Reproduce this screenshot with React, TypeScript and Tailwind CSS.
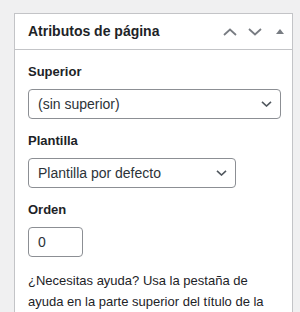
import React from "react";

function Chevron({ up = false, className = "" }: { up?: boolean; className?: string }) {
  return (
    <svg width="14" height="8" viewBox="0 0 14 8" className={className} fill="none">
      <path
        d={up ? "M1 7L7 1.5L13 7" : "M1 1L7 6.5L13 1"}
        stroke="currentColor"
        strokeWidth="1.8"
      />
    </svg>
  );
}

function SelectArrow() {
  return (
    <svg width="11" height="6" viewBox="0 0 11 6" fill="none" className="text-[#50575e]">
      <path d="M1 0.8L5.5 5L10 0.8" stroke="currentColor" strokeWidth="1.6" />
    </svg>
  );
}

function FakeSelect({ label, width }: { label: string; width: string }) {
  return (
    <div
      className={`mt-[7px] flex h-[30px] items-center justify-between rounded-[4px] border border-[#8c8f94] bg-white pl-[9px] pr-[8px] text-[14px] text-[#2c3338] ${width}`}
    >
      <span>{label}</span>
      <SelectArrow />
    </div>
  );
}

export default function App() {
  return (
    <div
      className="h-[312px] w-[300px] overflow-hidden bg-[#f0f0f1] pl-[14px] pt-[13px] text-[#1d2327]"
      style={{ fontFamily: '"Liberation Sans", Arial, sans-serif' }}
    >
      <div className="w-[279px] border border-[#c3c4c7] bg-white">
        {/* header */}
        <div className="flex h-[36px] items-center justify-between border-b border-[#c3c4c7] pl-[13px] pr-[8px]">
          <h2 className="text-[14px] font-semibold">Atributos de página</h2>
          <div className="flex items-center text-[#787c82]">
            <Chevron up className="mr-[11px]" />
            <Chevron className="mr-[14px]" />
            <svg width="8" height="5" viewBox="0 0 8 5" className="mt-[-1px]">
              <path d="M0 5L4 0L8 5Z" fill="currentColor" />
            </svg>
          </div>
        </div>

        {/* body */}
        <div className="px-[13px] pb-4">
          <p className="mt-[12px] text-[13px] font-semibold leading-[20px]">Superior</p>
          <FakeSelect label="(sin superior)" width="w-[253px]" />

          <p className="mt-[12px] text-[13px] font-semibold leading-[20px]">Plantilla</p>
          <FakeSelect label="Plantilla por defecto" width="w-[208px]" />

          <p className="mt-[12px] text-[13px] font-semibold leading-[20px]">Orden</p>
          <div className="mt-[7px] flex h-[30px] w-[55px] items-center rounded-[4px] border border-[#8c8f94] pl-[9px] text-[14px] text-[#2c3338]">
            0
          </div>

          <p className="mt-[13px] text-[13px] leading-[21px]">
            ¿Necesitas ayuda? Usa la pestaña de ayuda en la parte superior del título de la
            pantalla.
          </p>
        </div>
      </div>
    </div>
  );
}
